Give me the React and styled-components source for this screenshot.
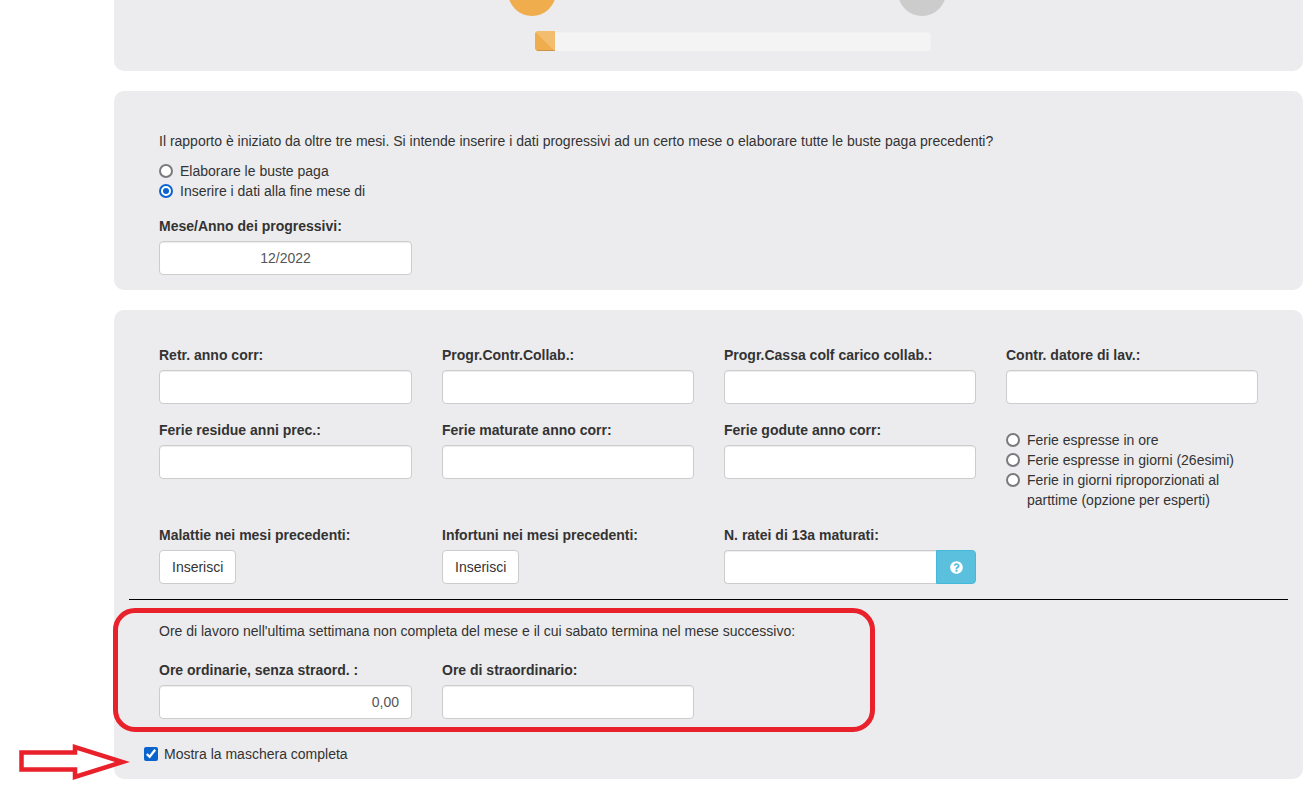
import React from "react";
import styled, { createGlobalStyle } from "styled-components";
import { FaQuestionCircle } from "react-icons/fa";

const Global = createGlobalStyle`
  html, body { margin: 0; padding: 0; background: #fff; }
  body { font-family: "Liberation Sans", Arial, sans-serif; font-size: 14px; line-height: 20px; color: #333; overflow: hidden; }
  * { box-sizing: border-box; }
`;

const Page = styled.div`
  position: relative;
  width: 1304px;
  height: 789px;
  overflow: hidden;
  padding-left: 114px;
`;

const Panel = styled.section`
  position: relative;
  width: 1189px;
  background: #ececee;
  border-radius: 10px;
  margin-bottom: 20px;
`;

const WizardPanel = styled(Panel)`
  height: 71px;
  border-radius: 0 0 10px 10px;
  overflow: hidden;
`;

const Steps = styled.div`
  display: flex;
  gap: 342px;
  padding-left: 394px;
  margin-top: -32px;
`;

const Step = styled.div`
  width: 48px;
  height: 48px;
  border-radius: 50%;
  background: ${p => (p.$active ? "#f0ad4e" : "#cccccc")};
`;

const Track = styled.div`
  width: 396px;
  height: 20px;
  margin: 15px 0 0 421px;
  border-radius: 4px;
  background: #f4f4f5;
  box-shadow: inset 0 1px 2px rgba(0, 0, 0, 0.05);
  overflow: hidden;
`;

const Fill = styled.div`
  height: 100%;
  background-color: #f0ad4e;
  background-image: linear-gradient(45deg, #f0ad4e 50%, #f3bd70 50%);
  box-shadow: inset 0 -1px 0 rgba(0, 0, 0, 0.15);
`;

const QuestionPanel = styled(Panel)`
  height: 199px;
  padding: 40px 45px 0;
`;

const Paragraph = styled.p`
  margin: 0 0 10px;
`;

const RadioLine = styled.label`
  display: flex;
  align-items: flex-start;
  height: ${p => (p.$tall ? "40px" : "20px")};
  gap: 7px;
`;

const Radio = styled.input.attrs({ type: "radio" })`
  appearance: none;
  position: relative;
  width: 14px;
  height: 14px;
  margin: 3px 0 0;
  flex: none;
  border: 2px solid #7a797e;
  border-radius: 50%;
  background: #fff;

  &:checked {
    border-color: #0b63ce;
  }
  &:checked::after {
    content: "";
    position: absolute;
    inset: 2px;
    border-radius: 50%;
    background: #0b63ce;
  }
`;

const Label = styled.div`
  font-weight: 700;
  height: 20px;
  line-height: 21px;
  margin-bottom: 5px;
`;

const Input = styled.input`
  display: block;
  width: ${p => p.$w || "100%"};
  height: 34px;
  padding: 6px 12px;
  border: 1px solid #ccc;
  border-radius: 4px;
  background: #fff;
  color: #555;
  font: inherit;
  text-align: ${p => p.$align || "left"};
  box-shadow: inset 0 1px 1px rgba(0, 0, 0, 0.075);
  outline: none;
`;

const FormPanel = styled(Panel)`
  height: 469px;
  margin-bottom: 0;
  padding: 35px 45px 0;
`;

const Grid = styled.div`
  display: grid;
  grid-template-columns: 253px 252px 252px 252px;
  column-gap: 30px;
  row-gap: ${p => p.$gap || "0"};
  margin-bottom: ${p => p.$mb || "0"};
`;

const Field = styled.div`
  min-width: 0;
`;

const RadioStack = styled.div`
  padding-top: 10px;
`;

const Button = styled.button`
  display: block;
  height: 34px;
  padding: 6px 12px;
  border: 1px solid #ccc;
  border-radius: 4px;
  background: #fff;
  color: #333;
  font: inherit;
`;

const InputGroup = styled.div`
  display: flex;
  height: 34px;
`;

const GroupInput = styled(Input)`
  flex: 1;
  min-width: 0;
  border-right: 0;
  border-radius: 4px 0 0 4px;
`;

const Addon = styled.button`
  width: 40px;
  flex: none;
  display: flex;
  align-items: center;
  justify-content: center;
  border: 1px solid #46b8da;
  border-radius: 0 4px 4px 0;
  background: #5bc0de;
  color: #fff;
  font-size: 13px;
  padding: 0;
`;

const Rule = styled.hr`
  height: 1px;
  border: 0;
  margin: 15px -30px 21px;
  background: #000;
`;

const Spaced = styled(Paragraph)`
  margin-bottom: 19px;
`;

const CheckLine = styled.label`
  display: flex;
  align-items: center;
  gap: 6px;
  margin: 25px 0 0 -15px;
`;

const Check = styled.input.attrs({ type: "checkbox" })`
  width: 14px;
  height: 14px;
  margin: 0;
  accent-color: #0b63ce;
`;

const RedBox = styled.div`
  position: absolute;
  left: -1px;
  top: 298px;
  width: 762px;
  height: 124px;
  border: 5px solid #e8212b;
  border-radius: 22px;
  pointer-events: none;
`;

const ArrowMark = styled.svg`
  position: absolute;
  left: 16px;
  top: 740px;
  width: 120px;
  height: 44px;
`;

export default function App() {
  const noop = () => {};
  return (
    <Page>
      <Global />
      <WizardPanel>
        <Steps>
          <Step $active />
          <Step />
        </Steps>
        <Track>
          <Fill style={{ width: `${(20 / 396) * 100}%` }} />
        </Track>
      </WizardPanel>

      <QuestionPanel>
        <Paragraph>
          Il rapporto è iniziato da oltre tre mesi. Si intende inserire i dati progressivi ad un certo mese o elaborare tutte le buste paga precedenti?
        </Paragraph>
        <RadioLine><Radio name="m" />Elaborare le buste paga</RadioLine>
        <RadioLine><Radio name="m" defaultChecked />Inserire i dati alla fine mese di</RadioLine>
        <Label style={{ marginTop: 15 }}>Mese/Anno dei progressivi:</Label>
        <Input $w="253px" $align="center" value="12/2022" onChange={noop} />
      </QuestionPanel>

      <FormPanel>
        <Grid $gap="16px" $mb="15px">
          <Field><Label>Retr. anno corr:</Label><Input /></Field>
          <Field><Label>Progr.Contr.Collab.:</Label><Input /></Field>
          <Field><Label>Progr.Cassa colf carico collab.:</Label><Input /></Field>
          <Field><Label>Contr. datore di lav.:</Label><Input /></Field>
          <Field><Label>Ferie residue anni prec.:</Label><Input /></Field>
          <Field><Label>Ferie maturate anno corr:</Label><Input /></Field>
          <Field><Label>Ferie godute anno corr:</Label><Input /></Field>
          <RadioStack>
            <RadioLine><Radio name="f" />Ferie espresse in ore</RadioLine>
            <RadioLine><Radio name="f" />Ferie espresse in giorni (26esimi)</RadioLine>
            <RadioLine $tall><Radio name="f" /><span>Ferie in giorni riproporzionati al<br />parttime (opzione per esperti)</span></RadioLine>
          </RadioStack>
        </Grid>
        <Grid>
          <Field><Label>Malattie nei mesi precedenti:</Label><Button>Inserisci</Button></Field>
          <Field><Label>Infortuni nei mesi precedenti:</Label><Button>Inserisci</Button></Field>
          <Field>
            <Label>N. ratei di 13a maturati:</Label>
            <InputGroup><GroupInput /><Addon aria-label="Aiuto"><FaQuestionCircle /></Addon></InputGroup>
          </Field>
        </Grid>
        <Rule />
        <Spaced>Ore di lavoro nell'ultima settimana non completa del mese e il cui sabato termina nel mese successivo:</Spaced>
        <Grid>
          <Field><Label>Ore ordinarie, senza straord. :</Label><Input $align="right" value="0,00" onChange={noop} /></Field>
          <Field><Label>Ore di straordinario:</Label><Input /></Field>
        </Grid>
        <CheckLine><Check defaultChecked />Mostra la maschera completa</CheckLine>
        <RedBox />
      </FormPanel>

      <ArrowMark viewBox="0 0 120 44" aria-hidden="true">
        <path d="M5.5 12.5 H59 V7 L106.5 22 L59 37 V29.5 H5.5 Z" fill="#fff" stroke="#e8212b" strokeWidth="4.5" strokeLinejoin="miter" />
      </ArrowMark>
    </Page>
  );
}
